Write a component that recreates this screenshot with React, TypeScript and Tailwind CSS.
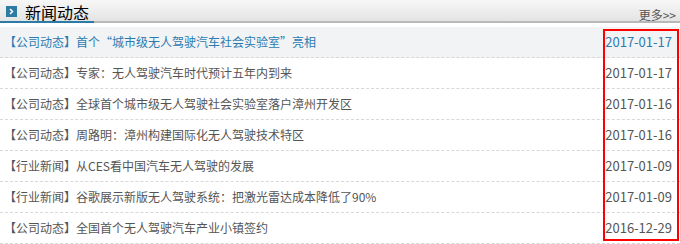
import React from 'react'

const news = [
  { tag: '公司动态', title: '首个“城市级无人驾驶汽车社会实验室”亮相', date: '2017-01-17' },
  { tag: '公司动态', title: '专家：无人驾驶汽车时代预计五年内到来', date: '2017-01-17' },
  { tag: '公司动态', title: '全球首个城市级无人驾驶社会实验室落户漳州开发区', date: '2017-01-16' },
  { tag: '公司动态', title: '周路明：漳州构建国际化无人驾驶技术特区', date: '2017-01-16' },
  { tag: '行业新闻', title: '从CES看中国汽车无人驾驶的发展', date: '2017-01-09' },
  { tag: '行业新闻', title: '谷歌展示新版无人驾驶系统：把激光雷达成本降低了90%', date: '2017-01-09' },
  { tag: '公司动态', title: '全国首个无人驾驶汽车产业小镇签约', date: '2016-12-29' },
]

export default function App() {
  return (
    <div
      className="relative w-[680px] h-[244px] bg-white overflow-hidden"
      style={{ fontFamily: '"Microsoft YaHei", "Noto Sans CJK SC", sans-serif' }}
    >
      {/* 标题栏 */}
      <div className="relative h-[23px] bg-gradient-to-b from-[#f7f7f7] to-[#e4e4e4] border-b-2 border-[#b8b8b8]">
        <div className="flex items-center h-[21px] pl-[6px]">
          <span className="w-[11px] h-[11px] bg-[#2d7aa3] flex items-center justify-center mt-[2px]">
            <svg width="7" height="7" viewBox="0 0 7 7">
              <path d="M2 1 L4.5 3.5 L2 6" stroke="#fff" strokeWidth="1.6" fill="none" />
            </svg>
          </span>
          <span className="ml-[8px] text-[16px] leading-[16px] text-black mt-[3px]">新闻动态</span>
          <span className="ml-auto mr-[4px] text-[12px] leading-[12px] text-[#555] mt-[8px]">更多&gt;&gt;</span>
        </div>
        <div className="absolute left-0 -bottom-[2px] w-[94px] h-[2px] bg-[#2b7ba6]" />
      </div>

      {/* 列表 */}
      <ul className="mt-[4px]">
        {news.map((n, i) => (
          <li
            key={i}
            className={
              'flex items-center justify-between h-[31px] pl-[4px] pr-[8px] text-[12px] border-b border-dashed border-[#d8d8d8] ' +
              (i === 0 ? 'bg-[#f2f3f5] text-[#2b7bb1]' : 'text-[#555]')
            }
          >
            <span>
              【{n.tag}】{n.title}
            </span>
            <span className="text-[13px]">{n.date}</span>
          </li>
        ))}
      </ul>

      {/* 红框标注 */}
      <div className="absolute left-[603px] top-[29px] w-[76px] h-[212px] border-2 border-[#ff0000]" />
    </div>
  )
}
